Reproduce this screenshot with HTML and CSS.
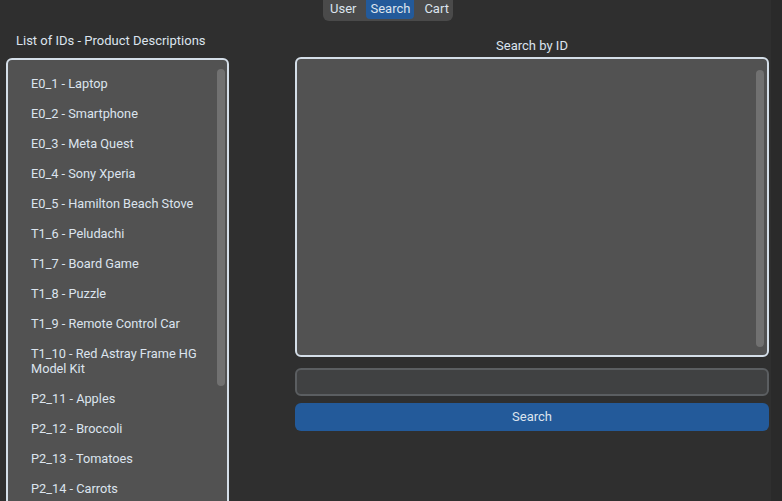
FILE: index.html
```html
<!DOCTYPE html>
<html>
<head>
<meta charset="utf-8">
<link rel="stylesheet" href="styles.css">
</head>
<body>
<div class="app">
  <div class="tabs">
    <span class="tab">User</span>
    <span class="tab active">Search</span>
    <span class="tab">Cart</span>
  </div>
  <div class="main">
    <div class="left">
      <div class="label left-label">List of IDs - Product Descriptions</div>
      <div class="list-frame">
        <div class="items">
          <div class="item">E0_1 - Laptop</div>
          <div class="item">E0_2 - Smartphone</div>
          <div class="item">E0_3 - Meta Quest</div>
          <div class="item">E0_4 - Sony Xperia</div>
          <div class="item">E0_5 - Hamilton Beach Stove</div>
          <div class="item">T1_6 - Peludachi</div>
          <div class="item">T1_7 - Board Game</div>
          <div class="item">T1_8 - Puzzle</div>
          <div class="item">T1_9 - Remote Control Car</div>
          <div class="item">T1_10 - Red Astray Frame HG Model Kit</div>
          <div class="item">P2_11 - Apples</div>
          <div class="item">P2_12 - Broccoli</div>
          <div class="item">P2_13 - Tomatoes</div>
          <div class="item">P2_14 - Carrots</div>
        </div>
        <div class="scrollbar list-scroll"></div>
      </div>
    </div>
    <div class="right">
      <div class="label right-label">Search by ID</div>
      <div class="textbox">
        <div class="scrollbar text-scroll"></div>
      </div>
      <div class="entry"></div>
      <div class="button">Search</div>
    </div>
  </div>
</div>
</body>
</html>
```

FILE: styles.css
```css
html, body {
  margin: 0;
  padding: 0;
  background: #2a2a2a;
  overflow: hidden;
}
.app {
  width: 771px;
  height: 501px;
  background: #2f2f2f;
  font-family: Roboto, "Liberation Sans", sans-serif;
  font-size: 13px;
  color: #dce4ee;
  overflow: hidden;
}
.tabs {
  margin-left: 323px;
  width: 130px;
  height: 21px;
  box-sizing: border-box;
  background: #4a4a4a;
  border-radius: 0 0 6px 6px;
  display: flex;
  align-items: flex-start;
  padding: 0 3px;
}
.tab {
  height: 19px;
  line-height: 18px;
  padding: 0 7px 0 4px;
  border-radius: 0 0 4px 4px;
}
.tab:first-child { padding-left: 4px; padding-right: 6px; }
.tab.active {
  background: #235a9a;
  padding: 0 4px;
  margin: 0 6px 0 4px;
}
.main {
  display: flex;
  padding-left: 6px;
  gap: 66px;
}
.left {
  width: 223px;
  display: flex;
  flex-direction: column;
}
.label {
  height: 16px;
  line-height: 16px;
}
.left-label {
  margin-top: 12px;
  margin-left: 10px;
  margin-bottom: 9px;
}
.list-frame {
  position: relative;
  height: 470px;
  box-sizing: border-box;
  border: 2px solid #d4dee8;
  border-radius: 6px;
  background: #525252;
  padding: 8.4px 0 0 23px;
}
.item {
  width: 175px;
  padding: 7.5px 0;
  line-height: 15px;
  font-size: 12.75px;
}
.scrollbar {
  position: absolute;
  width: 8px;
  background: #717171;
  border-radius: 4px;
}
.list-scroll {
  top: 9px;
  right: 2px;
  height: 317px;
}
.right {
  width: 474px;
  display: flex;
  flex-direction: column;
}
.right-label {
  text-align: center;
  margin-top: 17px;
  margin-bottom: 3px;
}
.textbox {
  position: relative;
  height: 300px;
  box-sizing: border-box;
  border: 2px solid #d4dee8;
  border-radius: 6px;
  background: #525252;
}
.text-scroll {
  top: 11px;
  right: 3px;
  height: 277px;
}
.entry {
  margin-top: 11px;
  height: 28px;
  box-sizing: border-box;
  border: 2px solid #5b5e61;
  border-radius: 6px;
  background: #404142;
}
.button {
  margin-top: 7px;
  height: 28px;
  line-height: 28px;
  border-radius: 6px;
  background: #235a9a;
  text-align: center;
}
```
